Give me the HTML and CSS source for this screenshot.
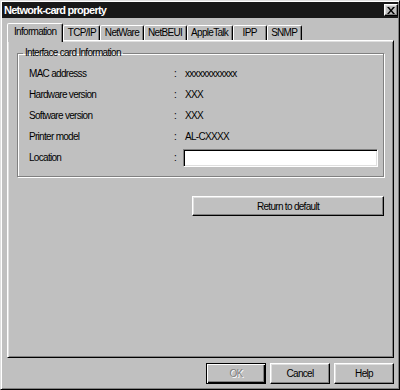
FILE: index.html
```html
<!DOCTYPE html>
<html lang="en">
<head>
    <meta charset="UTF-8">
    <title>Network-card property</title>
    <link rel="stylesheet" href="styles.css">
</head>
<body>
    <div class="window">
        <div class="titlebar">
            <span class="title">Network-card property</span>
            <button class="close-btn" aria-label="Close">
                <svg width="8" height="7" viewBox="0 0 8 7">
                    <path d="M0 0h2l2 2.5L6 0h2L5 3.5 8 7H6L4 4.5 2 7H0l3-3.5z" fill="#000"/>
                </svg>
            </button>
        </div>

        <div class="body">
            <div class="tabs">
                <div class="tab tab-active">Information</div>
                <div class="tab">TCP/IP</div>
                <div class="tab">NetWare</div>
                <div class="tab">NetBEUI</div>
                <div class="tab">AppleTalk</div>
                <div class="tab tab-wide">IPP</div>
                <div class="tab tab-wide">SNMP</div>
            </div>

            <div class="panel">
                <fieldset class="group">
                    <legend>Interface card Information</legend>
                    <div class="info-grid">
                        <span>MAC addresss</span><span>:</span><span class="value">xxxxxxxxxxxx</span>
                        <span>Hardware version</span><span>:</span><span class="value">XXX</span>
                        <span>Software version</span><span>:</span><span class="value">XXX</span>
                        <span>Printer model</span><span>:</span><span class="value">AL-CXXXX</span>
                        <span>Location</span><span>:</span><input type="text" class="field">
                    </div>
                </fieldset>
                <div class="panel-actions">
                    <button class="btn btn-wide">Return to default</button>
                </div>
            </div>

            <div class="footer">
                <button class="btn btn-default" disabled>OK</button>
                <button class="btn">Cancel</button>
                <button class="btn">Help</button>
            </div>
        </div>
    </div>
</body>
</html>
```

FILE: styles.css
```css
body {
    margin: 0;
    background: #c0c0c0;
}

.window {
    width: 400px;
    height: 390px;
    box-sizing: border-box;
    display: flex;
    flex-direction: column;
    padding: 1px;
    background: #c0c0c0;
    border: 1px solid;
    border-color: #dfdfdf #000 #000 #dfdfdf;
    box-shadow: inset 1px 1px 0 #fff, inset -1px -1px 0 #808080;
    font-family: "Liberation Sans", Arial, sans-serif;
    font-size: 10px;
    letter-spacing: -0.7px;
    color: #000;
}

.titlebar {
    height: 16px;
    display: flex;
    align-items: center;
    justify-content: space-between;
    padding: 0 0 0 2px;
    background: #181818;
}
.title {
    color: #fff;
    font-weight: bold;
    font-size: 11px;
    letter-spacing: -0.75px;
}
.close-btn {
    width: 14px;
    height: 12px;
    padding: 0;
    display: flex;
    align-items: center;
    justify-content: center;
    background: #c0c0c0;
    border: 1px solid;
    border-color: #fff #000 #000 #fff;
    box-shadow: inset -1px -1px 0 #808080, inset 1px 1px 0 #dfdfdf;
}

.body {
    flex: 1;
    display: flex;
    flex-direction: column;
    padding: 5px 4px 4px 5px;
}

/* tab strip */
.tabs {
    position: relative;
    z-index: 1;
    height: 17px;
    display: flex;
    align-items: flex-end;
}
.tab {
    height: 15px;
    box-sizing: border-box;
    padding: 0 3.5px;
    line-height: 13px;
    text-align: center;
    border: 1px solid;
    border-bottom: none;
    border-color: #fff #000 transparent #fff;
    border-radius: 2px 2px 0 0;
    box-shadow: inset -1px 0 0 #808080;
    background: #c0c0c0;
    white-space: nowrap;
}
.tab-wide {
    min-width: 34px;
}
.tab-active {
    height: 19px;
    margin-bottom: -2px;
    padding: 0 6px;
    line-height: 16px;
}

.panel {
    flex: 1;
    padding: 0 9px;
    border: 1px solid;
    border-color: #fff #000 #000 #fff;
    box-shadow: inset 1px 1px 0 #dfdfdf, inset -1px -1px 0 #808080;
}

/* group box */
.group {
    margin: 6px 0 0;
    padding: 4px 5px 8px 11px;
    border: 1px solid #808080;
    box-shadow: 1px 1px 0 #fff, inset 1px 1px 0 #fff;
}
.group legend {
    margin-left: -6px;
    padding: 0 2px;
    line-height: 12px;
}
.info-grid {
    display: grid;
    grid-template-columns: 145px 9px 1fr;
    grid-auto-rows: 21px;
    align-items: center;
}
.value {
    padding-left: 2px;
}
.field {
    height: 18px;
    box-sizing: border-box;
    width: 100%;
    margin: 0;
    padding: 0 2px;
    background: #fff;
    border: 1px solid;
    border-color: #808080 #fff #fff #808080;
    box-shadow: inset 1px 1px 0 #000, inset -1px -1px 0 #dfdfdf;
    font: inherit;
}

.panel-actions {
    display: flex;
    justify-content: flex-end;
    margin-top: 19px;
}

/* push buttons */
.btn {
    width: 60px;
    height: 21px;
    padding: 0;
    background: #c0c0c0;
    border: 1px solid;
    border-color: #fff #000 #000 #fff;
    box-shadow: inset -1px -1px 0 #808080, inset 1px 1px 0 #dfdfdf;
    font: inherit;
    letter-spacing: inherit;
    color: #000;
}
.btn-wide {
    width: 192px;
    height: 20px;
}
.btn-default {
    border-color: #000;
    box-shadow: inset 1px 1px 0 #fff, inset -1px -1px 0 #000, inset -2px -2px 0 #808080;
}
.btn:disabled {
    color: #808080;
    text-shadow: 1px 1px 0 #fff;
}

.footer {
    display: flex;
    justify-content: flex-end;
    gap: 4px;
    margin-top: 5px;
}
```
